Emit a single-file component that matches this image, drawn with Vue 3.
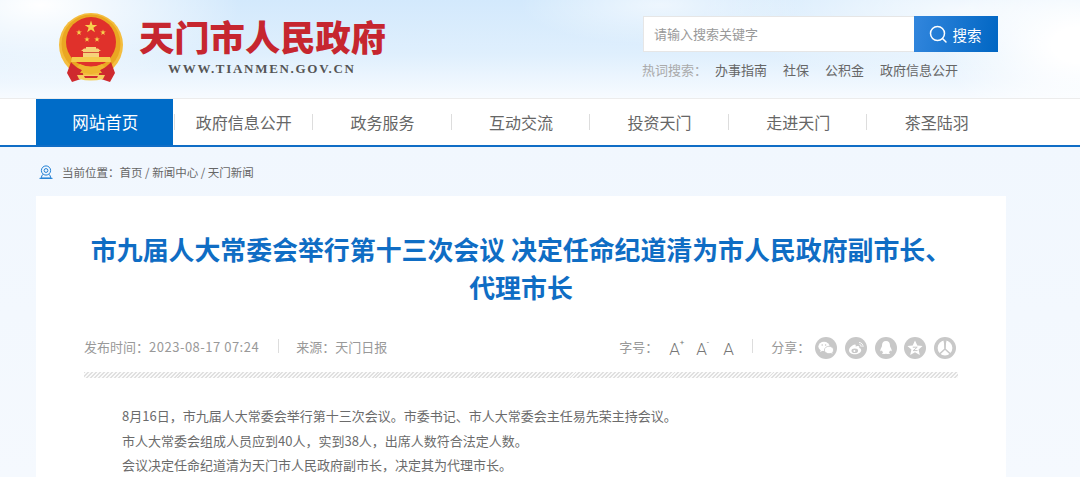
<script setup>
const navItems = ['网站首页', '政府信息公开', '政务服务', '互动交流', '投资天门', '走进天门', '茶圣陆羽']
const hotWords = ['办事指南', '社保', '公积金', '政府信息公开']
const paragraphs = [
  '8月16日\uFF0C市九届人大常委会举行第十三次会议。市委书记、市人大常委会主任易先荣主持会议。',
  '市人大常委会组成人员应到40人\uFF0C实到38人\uFF0C出席人数符合法定人数。',
  '会议决定任命纪道清为天门市人民政府副市长\uFF0C决定其为代理市长。'
]
const stars = [
  { x: 32, y: 14, r: 6.6 },
  { x: 20, y: 19.5, r: 3 },
  { x: 44, y: 19.5, r: 3 },
  { x: 28, y: 26.5, r: 2.9 },
  { x: 38, y: 26.5, r: 2.9 }
]
</script>

<template>
  <div class="page">
    <header class="top">
      <div class="brand">
        <svg class="emblem" width="64" height="70" viewBox="0 0 64 70" aria-hidden="true">
          <circle cx="32" cy="32" r="32" fill="#f4bd3e" />
          <circle cx="32" cy="31" r="29.500" fill="#eaa722" />
          <circle cx="32" cy="29" r="25" fill="#e0312b" />
          <g v-for="s in stars" :key="s.x + '-' + s.y" :transform="`translate(${s.x} ${s.y}) scale(${s.r})`">
            <polygon points="0,-1 .225,-.309 .951,-.309 .363,.118 .588,.809 0,.382 -.588,.809 -.363,.118 -.951,-.309 -.225,-.309" fill="#f7d24e" />
          </g>
          <path d="M27 34h10v1.500h2l3 2.500h-2v6H24v-6h-2l3-2.500h2z" fill="#f6d27a" />
          <path d="M24 39h16v1H24z" fill="#d4553c" />
          <path d="M13 44h38l1 5H12z" fill="#f5cb4c" />
          <path d="M12 49 L8 60 L13 69 L25 65 L23 57 Q16 54 12 49ZM52 49 L56 60 L51 69 L39 65 L41 57 Q48 54 52 49Z" fill="#cf2a2e" />
          <path d="M21 51q11 5 22 0l3 3-5 3 2 3H21l2-3-5-3z" fill="#efb52f" />
          <path d="M18 62h28l-2 4q-12 3-24 0z" fill="#f6cf5e" />
          <path d="M25 63h14l-1 2H26z" fill="#cf2a2e" />
        </svg>
        <div class="brand__text">
          <div class="brand__name">天门市人民政府</div>
          <div class="brand__url">WWW.TIANMEN.GOV.CN</div>
        </div>
      </div>
      <div class="finder">
        <div class="finder__box">
          <div class="finder__input">请输入搜索关键字</div>
          <button type="button" class="finder__btn">
            <svg width="19" height="19" viewBox="0 0 19 19" fill="none" stroke="#fff" stroke-width="1.5" aria-hidden="true">
              <circle cx="8.500" cy="8.500" r="7" />
              <path d="M13.500 13.500l3.500 3.500" stroke-linecap="round" />
            </svg>
            <span>搜索</span>
          </button>
        </div>
        <div class="hot">
          <span class="hot__label">热词搜索&#65306;</span>
          <a v-for="w in hotWords" :key="w" class="hot__word">{{ w }}</a>
        </div>
      </div>
    </header>

    <nav class="nav">
      <div class="nav__inner">
        <a v-for="(item, i) in navItems" :key="item" class="nav__item" :class="{ 'nav__item--on': i === 0 }">
          <span>{{ item }}</span>
        </a>
      </div>
    </nav>

    <div class="crumb">
      <svg width="14" height="14" viewBox="0 0 14 14" fill="none" stroke="#1f7fd4" stroke-width="1" aria-hidden="true">
        <circle cx="7" cy="5.500" r="4.600" />
        <circle cx="7" cy="5.500" r="1.900" />
        <path d="M3.500 9.500L2 13h10l-1.500-3.500M.5 13.400h13" />
      </svg>
      <span>当前位置&#65306;首页 / 新闻中心 / 天门新闻</span>
    </div>

    <main class="card">
      <h1 class="card__title">市九届人大常委会举行第十三次会议 决定任命纪道清为市人民政府副市长、<br>代理市长</h1>
      <div class="meta">
        <div class="meta__left">
          <span>发布时间&#65306;<span class="meta__date">2023-08-17 07:24</span></span>
          <i class="meta__sep"></i>
          <span>来源&#65306;天门日报</span>
        </div>
        <div class="meta__right">
          <span>字号&#65306;</span>
          <div class="sizes">
            <span class="size">A<sup>+</sup></span>
            <span class="size">A<sup>-</sup></span>
            <span class="size">A</span>
          </div>
          <i class="meta__sep meta__sep--share"></i>
          <span>分享&#65306;</span>
          <div class="shares">
            <svg class="share" viewBox="0 0 22 22" aria-hidden="true">
              <circle cx="11" cy="11" r="11" fill="#c8c8c8" />
              <ellipse cx="9" cy="9.400" rx="5.600" ry="4.600" fill="#fff" />
              <path d="M6 12.500l-1 2.600 3-1.600z" fill="#fff" />
              <ellipse cx="14" cy="13" rx="4.600" ry="3.700" fill="#fff" stroke="#c8c8c8" stroke-width=".8" />
              <path d="M16 15.500l1.400 1.800-.3-2.600z" fill="#fff" />
              <circle cx="7.200" cy="8" r=".8" fill="#c8c8c8" />
              <circle cx="10.600" cy="8" r=".8" fill="#c8c8c8" />
            </svg>
            <svg class="share" viewBox="0 0 22 22" aria-hidden="true">
              <circle cx="11" cy="11" r="11" fill="#c8c8c8" />
              <path d="M10 7.500c-3 .6-6 3.200-6 6 0 2.400 2.800 3.800 5.800 3.800 3.600 0 6.400-2 6.400-4.100 0-1.500-1.300-1.900-2-2.100.5-1.300 0-2.200-1.600-2-.8.100-1.500.5-1.900.7.300-1.400-.1-2.600-.7-2.300z" fill="#fff" />
              <ellipse cx="9.800" cy="13.800" rx="3.300" ry="2.300" fill="#c8c8c8" />
              <circle cx="9.400" cy="13.900" r="1" fill="#fff" />
              <path d="M14 5.500a4 4 0 0 1 4 4.500M14.500 7.500a2 2 0 0 1 1.700 2.300" fill="none" stroke="#fff" stroke-width=".9" />
            </svg>
            <svg class="share" viewBox="0 0 22 22" aria-hidden="true">
              <circle cx="11" cy="11" r="11" fill="#c8c8c8" />
              <path d="M11 4c-2.800 0-4 2.100-4 4.400 0 1-.4 1.700-1 2.900-.7 1.400-.9 2.700-.4 3 .4.200.9-.4 1.300-1 .2 1 .7 1.700 1.300 2.200-.8.300-1.400.7-1.200 1.100.3.500 2.500.5 4 .1 1.500.4 3.700.4 4-.1.200-.4-.4-.8-1.200-1.100.6-.5 1.100-1.200 1.300-2.200.4.600.9 1.200 1.300 1 .5-.3.300-1.600-.4-3-.6-1.200-1-1.900-1-2.900C15 6.100 13.800 4 11 4z" fill="#fff" />
            </svg>
            <svg class="share" viewBox="0 0 22 22" aria-hidden="true">
              <circle cx="11" cy="11" r="11" fill="#c8c8c8" />
              <polygon points="11,3.500 13.300,8.500 18.600,9 14.600,12.600 15.800,18 11,15.200 6.200,18 7.400,12.600 3.400,9 8.700,8.500" fill="#fff" />
              <path d="M8.800 10.200h4.400l-4 3.400h4.300" fill="none" stroke="#c8c8c8" stroke-width="1" />
            </svg>
            <svg class="share" viewBox="0 0 22 22" aria-hidden="true">
              <circle cx="11" cy="11" r="11" fill="#c8c8c8" />
              <circle cx="11" cy="11" r="7.400" fill="#fff" />
              <path d="M11 3v9L5 17.500M11 12l6 5.500" fill="none" stroke="#c8c8c8" stroke-width="1.600" />
              <path d="M9.500 3.500h3l-1.500 9z" fill="#c8c8c8" />
            </svg>
          </div>
        </div>
      </div>
      <div class="stripe"></div>
      <article class="article">
        <p v-for="p in paragraphs" :key="p">{{ p }}</p>
      </article>
    </main>
  </div>
</template>

<style>
html,
body {
  margin: 0;
  overflow: hidden;
}
</style>

<style scoped>
.page {
  height: 477px;
  overflow: hidden;
  background: linear-gradient(180deg, #f1f7fe 147px, #f5f9fe 477px);
  font-family: "Noto Sans CJK SC", "Liberation Sans", sans-serif;
  color: #555;
}

.top {
  height: 99px;
  box-sizing: border-box;
  display: flex;
  justify-content: space-between;
  padding: 13px 82px 0 59px;
  background:
    radial-gradient(ellipse 200px 80px at 40px 5px, #fff, rgba(255, 255, 255, 0)),
    radial-gradient(ellipse 140px 90px at 1080px 45px, #fff 20%, rgba(255, 255, 255, 0)),
    radial-gradient(ellipse 260px 70px at 960px 10px, rgba(255, 255, 255, 0.75), rgba(255, 255, 255, 0)),
    radial-gradient(ellipse 140px 40px at 660px 5px, rgba(255, 255, 255, 0.6), rgba(255, 255, 255, 0)),
    linear-gradient(180deg, #d3e9fc 0%, #dfeffd 55%, #f7fbff 100%);
  border-bottom: 1px solid #ececec;
}

.brand {
  display: flex;
  gap: 16px;
}

.emblem {
  display: block;
}

.brand__name {
  margin-top: 2px;
  font-size: 35.300px;
  line-height: 42px;
  font-weight: 900;
  color: #c6262f;
  white-space: nowrap;
}

.brand__url {
  margin: 4px 0 0 29px;
  font-family: "Liberation Serif", serif;
  font-size: 13px;
  line-height: 16px;
  font-weight: 700;
  letter-spacing: 1.700px;
  color: #555;
  white-space: nowrap;
}

.finder {
  padding-top: 3px;
}

.finder__box {
  display: flex;
  width: 355px;
  height: 36px;
  margin-left: 1px;
}

.finder__input {
  flex: 1;
  box-sizing: border-box;
  padding-left: 10px;
  background: #fff;
  border: 1px solid #e6e6e6;
  border-right: 0;
  font-size: 13px;
  line-height: 34px;
  color: #999;
}

.finder__btn {
  width: 84px;
  display: flex;
  align-items: center;
  justify-content: center;
  gap: 5px;
  padding: 0 2px 0 0;
  border: 0;
  background: linear-gradient(100deg, #3286dd, #0066c3);
  font: inherit;
  font-size: 14.500px;
  color: #fff;
}

.hot {
  display: flex;
  margin-top: 9px;
  font-size: 13px;
  line-height: 18px;
}

.hot__label {
  width: 73px;
  color: #aaa;
}

.hot__word {
  margin-right: 16px;
  color: #666;
}

.nav {
  height: 48px;
  box-sizing: border-box;
  background: #fff;
  border-bottom: 2px solid #0f6dc6;
  padding: 0 74px 0 36px;
}

.nav__inner {
  display: grid;
  grid-template-columns: repeat(7, 1fr);
  height: 46px;
  font-size: 16px;
}

.nav__item {
  display: flex;
  align-items: center;
  justify-content: center;
  position: relative;
  color: #666;
}

.nav__item:not(:last-child)::after {
  content: "";
  position: absolute;
  right: 0;
  top: 15px;
  width: 1px;
  height: 16px;
  background: #ddd;
}

.nav__item--on {
  background: linear-gradient(#006cc8, #006cc8) no-repeat left top / 137px 100%;
  color: #fff;
  font-size: 16.500px;
}

.crumb {
  height: 49px;
  box-sizing: border-box;
  display: flex;
  align-items: center;
  gap: 9px;
  padding: 0 0 0 39px;
  font-size: 11.500px;
  color: #666;
}

.card {
  margin: 0 74px 0 36px;
  height: 300px;
  padding: 0 48px;
  background: #fff;
}

.card__title {
  margin: 0;
  padding-top: 34px;
  font-size: 25.900px;
  line-height: 38px;
  font-weight: 700;
  text-align: center;
  color: #0f6dc4;
}

.meta {
  display: flex;
  justify-content: space-between;
  align-items: center;
  margin-top: 28px;
  height: 24px;
  font-size: 13px;
  color: #999;
}

.meta__left,
.meta__right {
  display: flex;
  align-items: center;
}

.meta__date {
  letter-spacing: 0.500px;
}

.meta__sep {
  width: 1px;
  height: 14px;
  margin: 0 17px 0 19px;
  background: #ddd;
}

.meta__sep--share {
  margin: 0 18px 0 2px;
}

.meta__right {
  padding-right: 2px;
}

.sizes {
  display: flex;
  margin-left: 11px;
  padding-top: 5px;
  font-family: Roboto, "Liberation Sans", sans-serif;
  font-weight: 300;
  font-size: 17px;
  color: #777;
}

.size {
  display: flex;
  width: 27px;
  line-height: 22px;
}

.size sup {
  font-size: 8px;
  font-weight: 400;
  line-height: 10px;
}

.shares {
  display: flex;
  gap: 7.700px;
  margin-left: 5px;
  padding-top: 3px;
}

.share {
  display: block;
  width: 22px;
  height: 22px;
}

.stripe {
  height: 6px;
  margin-top: 14px;
  background: repeating-linear-gradient(135deg, #e0e0e0 0 1.400px, #fafafa 1.400px 2.800px);
}

.article {
  padding: 26px 38px 0;
  font-size: 13px;
  line-height: 24.500px;
  color: #6b6b6b;
}

.article p {
  margin: 0;
}
</style>
